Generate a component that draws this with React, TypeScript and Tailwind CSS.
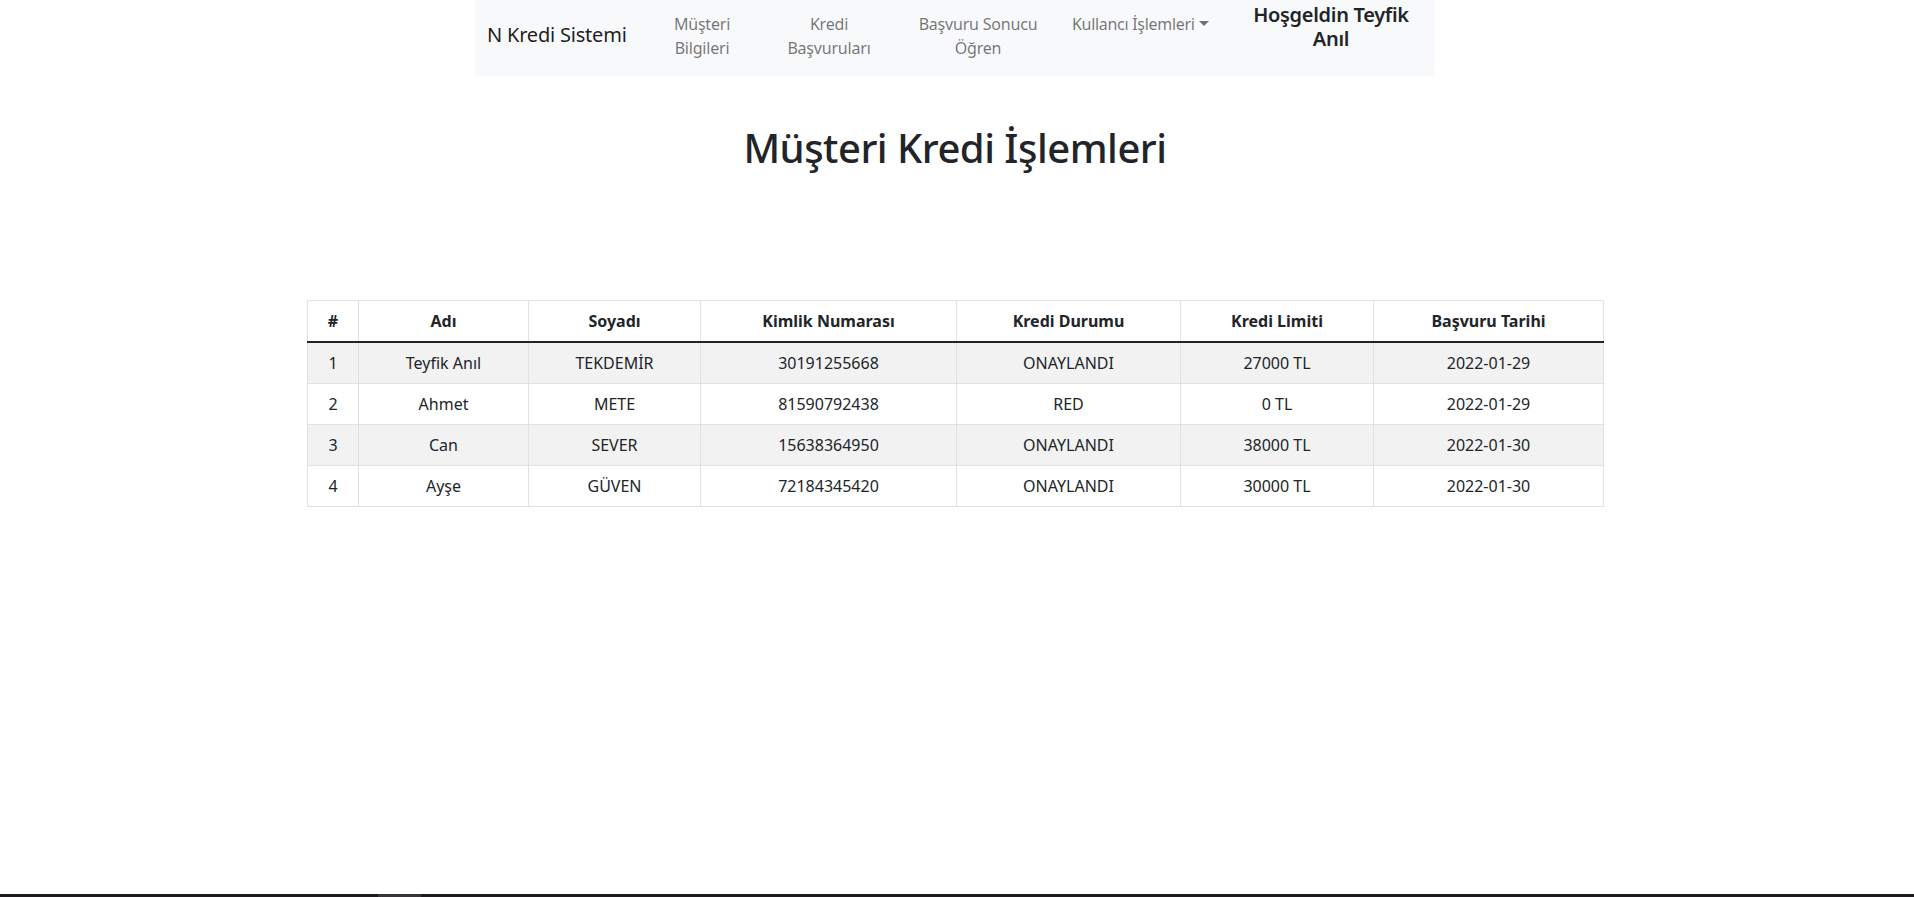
import React from 'react';

const rows = [
  { id: 1, name: "Teyfik Anıl", surname: "TEKDEMİR", tc: "30191255668", status: "ONAYLANDI", limit: "27000 TL", date: "2022-01-29" },
  { id: 2, name: "Ahmet", surname: "METE", tc: "81590792438", status: "RED", limit: "0 TL", date: "2022-01-29" },
  { id: 3, name: "Can", surname: "SEVER", tc: "15638364950", status: "ONAYLANDI", limit: "38000 TL", date: "2022-01-30" },
  { id: 4, name: "Ayşe", surname: "GÜVEN", tc: "72184345420", status: "ONAYLANDI", limit: "30000 TL", date: "2022-01-30" },
];

const cell = "border border-[#dee2e6] px-2 py-2 leading-6 text-center";

const App: React.FC = () => {
  return (
    <div className="min-h-screen flex flex-col bg-white text-[#212529]" style={{ fontFamily: '"Noto Sans", sans-serif' }}>
      <div className="flex-1 pr-[4px]">
        {/* Navbar */}
        <nav className="w-[960px] mx-auto h-[76px] bg-[#f8f9fa] flex items-start">
          <a className="w-[165px] pl-3 mt-[20px] text-[20px] leading-[30px] text-black/90 whitespace-nowrap tracking-[-0.2px]">N Kredi Sistemi</a>
          <a className="w-[124px] mt-[12px] text-center text-[16px] leading-6 text-black/55 tracking-[-0.2px]">Müşteri<br />Bilgileri</a>
          <a className="w-[130px] mt-[12px] text-center text-[16px] leading-6 text-black/55 tracking-[-0.2px]">Kredi<br />Başvuruları</a>
          <a className="w-[168px] mt-[12px] text-center text-[16px] leading-6 text-black/55 tracking-[-0.2px]">Başvuru Sonucu<br />Öğren</a>
          <a className="w-[165px] pl-[10px] mt-[12px] text-left text-[16px] leading-6 text-black/55 whitespace-nowrap tracking-[-0.3px]">
            Kullancı İşlemleri
            <span className="inline-block w-0 h-0 ml-[4px] align-[4px] border-x-[5px] border-x-transparent border-t-[5px] border-t-current" />
          </a>
          <div className="w-[208px] mt-[3px] text-center text-[20px] leading-6 font-semibold text-[#212529] tracking-[-0.3px]">Hoşgeldin Teyfik<br />Anıl</div>
        </nav>

        <h1 className="mt-[48px] text-center text-[40px] leading-[48px] font-medium tracking-[-0.5px]">Müşteri Kredi İşlemleri</h1>

        <div className="w-[1296px] mx-auto mt-[128px]">
          <table className="w-full table-fixed border-collapse text-[16px]">
            <thead>
              <tr>
                <th className={`${cell} w-[51px] font-bold border-b-2 border-b-[#212529]`}>#</th>
                <th className={`${cell} w-[170px] font-bold border-b-2 border-b-[#212529]`}>Adı</th>
                <th className={`${cell} w-[172px] font-bold border-b-2 border-b-[#212529]`}>Soyadı</th>
                <th className={`${cell} w-[256px] font-bold border-b-2 border-b-[#212529]`}>Kimlik Numarası</th>
                <th className={`${cell} w-[224px] font-bold border-b-2 border-b-[#212529]`}>Kredi Durumu</th>
                <th className={`${cell} w-[193px] font-bold border-b-2 border-b-[#212529]`}>Kredi Limiti</th>
                <th className={`${cell} w-[230px] font-bold border-b-2 border-b-[#212529]`}>Başvuru Tarihi</th>
              </tr>
            </thead>
            <tbody>
              {rows.map((r, i) => (
                <tr key={r.id} className={i % 2 === 0 ? "bg-[#f2f2f2]" : "bg-white"}>
                  <td className={cell}>{r.id}</td>
                  <td className={cell}>{r.name}</td>
                  <td className={cell}>{r.surname}</td>
                  <td className={cell}>{r.tc}</td>
                  <td className={cell}>{r.status}</td>
                  <td className={cell}>{r.limit}</td>
                  <td className={cell}>{r.date}</td>
                </tr>
              ))}
            </tbody>
          </table>
        </div>
      </div>

      {/* bottom strip */}
      <div className="h-[3px] bg-[#201820] flex">
        <div className="ml-[378px] w-[43px] h-full bg-[#3a333c]" />
      </div>
    </div>
  );
};

export default App;
